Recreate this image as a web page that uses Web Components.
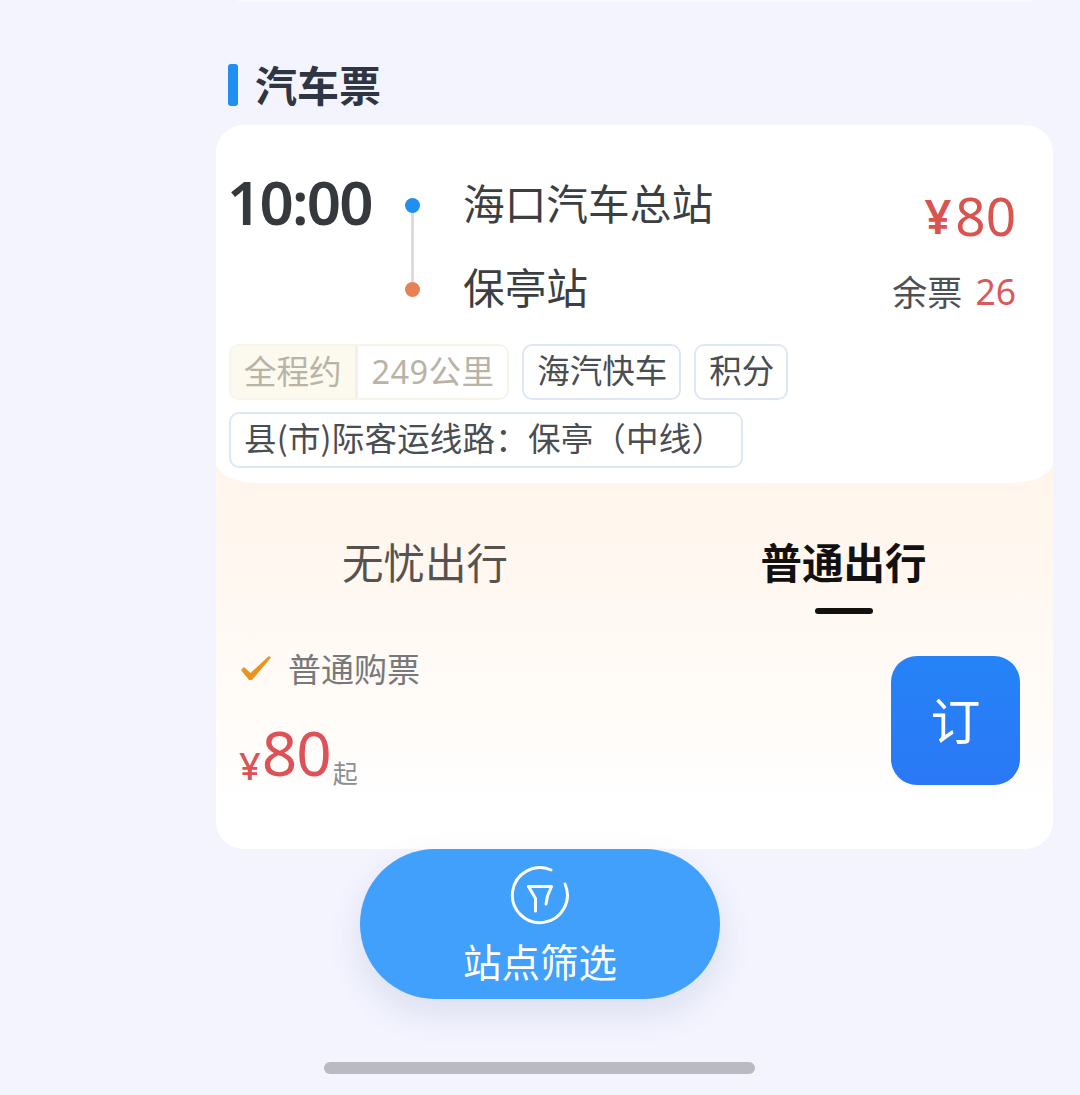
<!DOCTYPE html>
<html lang="zh">
<head>
<meta charset="utf-8">
<title>汽车票</title>
<style>
html, body { margin: 0; padding: 0; background: #f3f4fe; }
body { font-family: "Noto Sans CJK SC", "Noto Sans", sans-serif; }
</style>
</head>
<body>
<bus-page></bus-page>
<script>
class SectionTitle extends HTMLElement {
    constructor() {
        super()
        this.attachShadow({ mode: 'open' }).innerHTML = `
        <style>
        :host { display: flex; align-items: center; gap: 18px; height: 42px; padding-left: 12px; color: #2f3542; }
        i { width: 10px; height: 42px; border-radius: 3px; background: #1f8ff2; }
        span { font-size: 42px; font-weight: 700; line-height: 42px; margin-top: -3px; margin-left: -1px; }
        </style>
        <i></i><span><slot></slot></span>`
    }
}
customElements.define("section-title", SectionTitle)

class TripTag extends HTMLElement {
    constructor() {
        super()
        this.attachShadow({ mode: 'open' }).innerHTML = `
        <style>
        :host { display: inline-flex; align-items: center; box-sizing: border-box; height: 56px; padding: 0 12px 5px 13px; border: 2px solid #dfe6f6; border-radius: 10px; background: #fff; color: #4a4d52; font-size: 32.5px; line-height: 1; white-space: nowrap; }
        :host([tall]) { letter-spacing: .2px; padding-left: 13px; padding-right: 17px; }
        </style>
        <slot></slot>`
    }
}
customElements.define("trip-tag", TripTag)

class DistanceTag extends HTMLElement {
    constructor() {
        super()
        this.attachShadow({ mode: 'open' }).innerHTML = `
        <style>
        :host { display: inline-flex; height: 56px; box-sizing: border-box; border: 2px solid #f7f4e9; border-radius: 10px; color: #b9b3a6; font-size: 32.5px; overflow: hidden; white-space: nowrap; }
        div { display: flex; align-items: center; padding: 0 13px 5px; }
        .a { background: #fcf9ee; border-right: 3px solid #f4f1e4; }
        .b { background: #fff; font-family: "Noto Sans", "Noto Sans CJK SC", sans-serif; letter-spacing: .4px; padding-left: 14px; padding-right: 13px; }
        </style>
        <div class="a">全程约</div><div class="b">249公里</div>`
    }
}
customElements.define("distance-tag", DistanceTag)

class RouteInfo extends HTMLElement {
    constructor() {
        super()
        this.attachShadow({ mode: 'open' }).innerHTML = `
        <style>
        :host { display: flex; align-items: flex-start; padding: 45px 37px 0 13px; height: 174px; box-sizing: border-box; }
        .time { width: 145px; margin: -3px 0 0 -2px; font: 600 60px/70px "Noto Sans", sans-serif; color: #35383c; letter-spacing: -1.8px; white-space: nowrap; }
        .line { margin: 28px 0 0 33px; width: 14px; height: 99px; display: flex; flex-direction: column; align-items: center; }
        .line b { width: 15px; height: 15px; border-radius: 50%; flex: none; }
        .line u { width: 3px; flex: 1; background: #dcdcdc; }
        .stations { margin-left: 44px; flex: 1; font-size: 41.7px; line-height: 84px; color: #3c3f42; margin-top: -10px; white-space: nowrap; }
        .price { text-align: right; color: #d9534f; }
        .money { font: 400 53px/60px "Noto Sans", sans-serif; margin-top: 16px; display: flex; align-items: center; justify-content: flex-end; gap: 4px; }
        .money em { font-style: normal; font-size: 47px; font-weight: 600; }
        .left { margin-top: 23px; font-size: 35px; line-height: 44px; color: #4e5053; display: flex; align-items: center; gap: 13px; justify-content: flex-end; }
        .left span { font: 400 35.5px/44px "Noto Sans", sans-serif; color: #d9595a; }
        </style>
        <div class="time">10:00</div>
        <div class="line"><b style="background:#1f8ff2"></b><u></u><b style="background:#e58253"></b></div>
        <div class="stations"><div>海口汽车总站</div><div>保亭站</div></div>
        <div class="price">
            <div class="money"><em>¥</em>80</div>
            <div class="left">余票<span>26</span></div>
        </div>`
    }
}
customElements.define("route-info", RouteInfo)

class FareTabs extends HTMLElement {
    constructor() {
        super()
        this.attachShadow({ mode: 'open' }).innerHTML = `
        <style>
        :host { display: grid; grid-template-columns: 418px 419px; height: 114px; }
        div { display: flex; flex-direction: column; align-items: center; font-size: 41.5px; line-height: 58px; color: #56534f; }
        .on { color: #111; font-weight: 700; }
        .on i { display: block; width: 58px; height: 6px; border-radius: 3px; background: #111; margin-top: 18px; }
        </style>
        <div>无忧出行</div>
        <div class="on">普通出行<i></i></div>`
    }
}
customElements.define("fare-tabs", FareTabs)

class BookButton extends HTMLElement {
    constructor() {
        super()
        this.attachShadow({ mode: 'open' }).innerHTML = `
        <style>
        :host { display: flex; align-items: center; justify-content: center; box-sizing: border-box; width: 129px; height: 129px; padding-bottom: 6px; border-radius: 26px; background: linear-gradient(#2583f7, #2b78f5); color: #fff; font-size: 50px; line-height: 1; }
        </style>
        <slot></slot>`
    }
}
customElements.define("book-button", BookButton)

class FareOption extends HTMLElement {
    constructor() {
        super()
        this.attachShadow({ mode: 'open' }).innerHTML = `
        <style>
        :host { display: flex; justify-content: space-between; padding: 0 33px 0 25px; }
        .name { display: flex; align-items: center; gap: 15px; height: 44px; font-size: 33px; color: #77787a; }
        svg { width: 32px; height: 26px; display: block; }
        .fare { display: flex; align-items: baseline; margin-top: 26px; color: #dc5257; font-family: "Noto Sans", sans-serif; }
        .fare em { font-style: normal; font-size: 38px; font-weight: 500; margin: 0 1px 0 -2px; transform: translateY(4px); }
        .fare b { font-weight: 400; font-size: 62px; line-height: 72px; letter-spacing: -1px; }
        .fare small { font: 25px/1 "Noto Sans CJK SC", sans-serif; color: #8c8e91; margin-left: 2px; transform: translateY(7px); }
        book-button { margin-top: 10px; }
        </style>
        <div>
            <div class="name">
                <svg viewBox="0 0 32 26"><path d="M0 15 L3 12 L9.5 18 L28 1 L30 2.5 L11 25 L8 25 Z" fill="#e8951f"/></svg>
                普通购票
            </div>
            <div class="fare"><em>¥</em><b>80</b><small>起</small></div>
        </div>
        <book-button>订</book-button>`
    }
}
customElements.define("fare-option", FareOption)

class TicketCard extends HTMLElement {
    constructor() {
        super()
        this.attachShadow({ mode: 'open' }).innerHTML = `
        <style>
        :host { display: block; width: 837px; height: 724px; border-radius: 28px; background: #fff; overflow: hidden; }
        .top { position: relative; z-index: 1; background: #fff; border-radius: 0 0 44px 44px / 0 0 20px 20px; height: 358px; box-sizing: border-box; }
        .tags { display: flex; flex-wrap: wrap; gap: 12px 13px; padding: 45px 13px 0; }
        .bottom { margin-top: -22px; padding-top: 71px; height: 388px; box-sizing: border-box; background: linear-gradient(#fff5eb 0, #fff9f3 40%, #fffcf9 70%, #fff 88%); }
        </style>
        <div class="top">
            <route-info></route-info>
            <div class="tags">
                <distance-tag></distance-tag>
                <trip-tag>海汽快车</trip-tag>
                <trip-tag>积分</trip-tag>
                <trip-tag tall>县(市)际客运线路：保亭（中线）</trip-tag>
            </div>
        </div>
        <div class="bottom">
            <fare-tabs></fare-tabs>
            <fare-option></fare-option>
        </div>`
    }
}
customElements.define("ticket-card", TicketCard)

class FilterPill extends HTMLElement {
    constructor() {
        super()
        this.attachShadow({ mode: 'open' }).innerHTML = `
        <style>
        :host { display: flex; flex-direction: column; align-items: center; box-sizing: border-box; width: 360px; height: 150px; padding-top: 17px; border-radius: 75px; background: #41a0fb; color: #fff; box-shadow: 0 14px 34px rgba(70, 90, 140, 0.14); }
        svg { width: 60px; height: 60px; display: block; }
        span { font-size: 38.5px; line-height: 54px; margin-top: 7px; }
        </style>
        <svg viewBox="0 0 60 60" fill="none" stroke="#fff" stroke-width="3" stroke-linecap="round" stroke-linejoin="round">
            <path d="M41 4.5 A27.5 27.5 0 1 0 55 18.5" transform="translate(0 -.5)"/>
            <path d="M18.5 20.5 H41.5 L37.5 30 L36 38"/>
            <path d="M18.5 20.5 L25.5 32.5 V45"/>
        </svg>
        <span>站点筛选</span>`
    }
}
customElements.define("filter-pill", FilterPill)

class BusPage extends HTMLElement {
    constructor() {
        super()
        this.attachShadow({ mode: 'open' }).innerHTML = `
        <style>
        :host { display: flex; flex-direction: column; width: 1080px; height: 1095px; overflow: hidden; }
        .edge { height: 2px; margin: 0 48px 0 238px; background: #f8f8ff; }
        section-title { margin: 62px 0 19px 216px; }
        ticket-card { margin-left: 216px; }
        filter-pill { align-self: center; }
        .home { align-self: center; width: 431px; height: 12px; margin-top: 63px; margin-left: -1px; border-radius: 6px; background: #babac2; }
        </style>
        <div class="edge"></div>
        <section-title>汽车票</section-title>
        <ticket-card></ticket-card>
        <filter-pill></filter-pill>
        <div class="home"></div>`
    }
}
customElements.define("bus-page", BusPage)
</script>
</body>
</html>
